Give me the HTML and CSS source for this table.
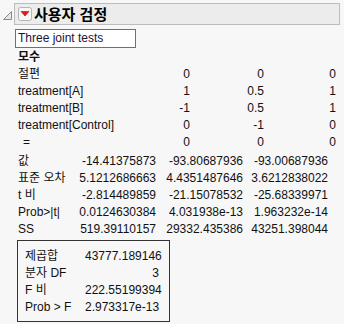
FILE: index.html
```html
<!DOCTYPE html>
<html lang="ko">
<head>
<meta charset="utf-8">
<link rel="stylesheet" href="styles.css">
</head>
<body>
<div class="report">
  <div class="head">
    <svg class="disclose" width="10" height="10" viewBox="0 0 10 10"><path d="M8.5 0.5 L8.5 8.5 L0.5 8.5 Z" fill="#e6e6e6" stroke="#8a8a8a" stroke-width="1"/></svg>
    <div class="bar">
      <span class="redbtn"><svg width="14" height="14" viewBox="0 0 14 14"><rect x="0.5" y="0.5" width="13" height="13" rx="2" fill="#f6f6f6" stroke="#b4b4b4"/><path d="M3 4.5 L11 4.5 L7 9 Z" fill="#e3161c" stroke="#b00a10" stroke-width="0.6"/></svg></span>
      <span class="title">사용자 검정</span>
    </div>
  </div>
  <div class="textbox">Three joint tests</div>

  <div class="grid contrast">
    <div class="bold">모수</div><div></div><div></div><div></div>
    <div>절편</div><div class="n">0</div><div class="n">0</div><div class="n">0</div>
    <div>treatment[A]</div><div class="n">1</div><div class="n">0.5</div><div class="n">1</div>
    <div>treatment[B]</div><div class="n">-1</div><div class="n">0.5</div><div class="n">1</div>
    <div>treatment[Control]</div><div class="n">0</div><div class="n">-1</div><div class="n">0</div>
    <div class="eq">=</div><div class="n">0</div><div class="n">0</div><div class="n">0</div>
  </div>

  <div class="grid results">
    <div>값</div><div class="n">-14.41375873</div><div class="n">-93.80687936</div><div class="n">-93.00687936</div>
    <div>표준 오차</div><div class="n">5.1212686663</div><div class="n">4.4351487646</div><div class="n">3.6212838022</div>
    <div>t 비</div><div class="n">-2.814489859</div><div class="n">-21.15078532</div><div class="n">-25.68339971</div>
    <div>Prob&gt;|t|</div><div class="n">0.0124630384</div><div class="n">4.031938e-13</div><div class="n">1.963232e-14</div>
    <div>SS</div><div class="n">519.39110157</div><div class="n">29332.435386</div><div class="n">43251.398044</div>
  </div>

  <div class="box">
    <div class="grid joint">
      <div>제곱합</div><div class="n">43777.189146</div>
      <div>분자 DF</div><div class="n">3</div>
      <div>F 비</div><div class="n">222.55199394</div>
      <div>Prob &gt; F</div><div class="n">2.973317e-13</div>
    </div>
  </div>
</div>
</body>
</html>
```
FILE: styles.css
```css
html, body {
  margin: 0;
  padding: 0;
  background: #f7f7f7;
}
body {
  width: 344px;
  height: 324px;
  overflow: hidden;
  font-family: "Liberation Sans", "Noto Sans CJK KR", sans-serif;
  font-size: 12px;
  color: #111;
}
.report {
  padding-top: 3px;
}
.head {
  display: flex;
  align-items: flex-start;
  margin-right: 4px;
}
.disclose {
  margin: 8px 0 0 3px;
  flex: none;
}
.bar {
  flex: 1;
  margin-left: 1px;
  height: 20px;
  background: #ececec;
  border: 1px solid #bcbcbc;
  display: flex;
  align-items: center;
  padding-left: 3px;
}
.redbtn {
  display: flex;
  width: 14px;
  height: 14px;
}
.title {
  margin-left: 2px;
  font-family: "Noto Sans CJK KR", sans-serif;
  font-weight: bold;
  font-size: 15px;
  color: #000;
  line-height: 20px;
}
.textbox {
  margin: 4px 0 0 15px;
  width: 117px;
  height: 17px;
  border: 1px solid #707070;
  background: #fff;
  padding-left: 2px;
  line-height: 17px;
  color: #16163a;
}
.grid {
  display: grid;
  line-height: 17px;
  white-space: nowrap;
}
.n {
  text-align: right;
}
.bold {
  font-weight: bold;
}
.contrast {
  margin: 1px 0 0 18px;
  grid-template-columns: 112px 60px 74px 72px;
}
.eq {
  padding-left: 5px;
}
.results {
  margin: 2px 0 0 18px;
  grid-template-columns: 60px 78px 87px 85px;
}
.box {
  margin: 2px 0 0 17px;
  width: 134px;
  border: 1px solid #333;
  padding: 7px 10px 5px 7px;
}
.joint {
  grid-template-columns: 60px 74px;
}
```
